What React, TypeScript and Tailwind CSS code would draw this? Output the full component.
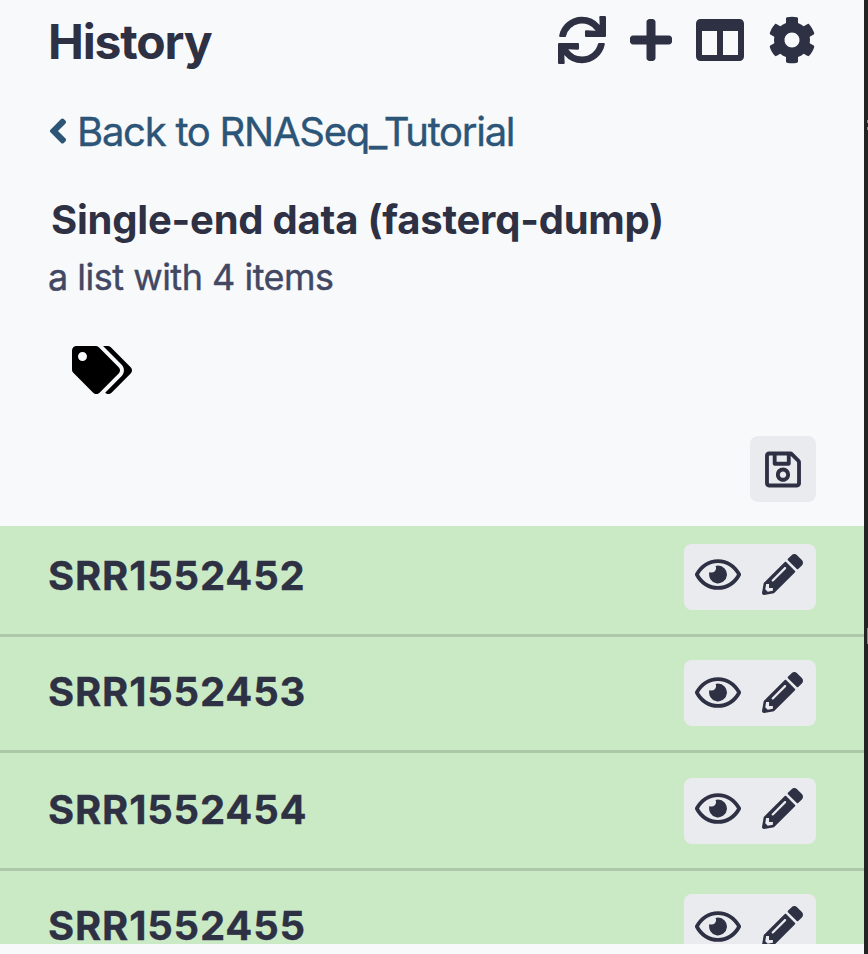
import { FaSync, FaPlus, FaColumns, FaCog, FaAngleLeft, FaTags, FaRegSave, FaRegEye, FaPencilAlt } from "react-icons/fa";

const items = [
  { name: "SRR1552452", row: "h-[111px] border-b-[3px] pt-[18px]", pad: "pb-[5px]" },
  { name: "SRR1552453", row: "h-[116px] border-b-[3px] pt-[23px]", pad: "pb-[2px]" },
  { name: "SRR1552454", row: "h-[118px] border-b-[3px] pt-[25px]", pad: "pb-[5px]" },
  { name: "SRR1552455", row: "h-[73px] pt-[23px]", pad: "pb-[1px]" },
];

export default function App() {
  return (
    <div className="flex h-[954px] w-[868px] overflow-hidden bg-[#232323] font-['Inter','Liberation_Sans',sans-serif] text-[#2e3044]">
      <main className="flex h-full w-[864px] flex-col bg-[#f8f9fb]">
        <header className="flex h-[80px] items-center justify-between pr-[48px] pl-[48px]">
          <h1 className="mt-[3px] text-[48px] leading-[56px] font-bold tracking-[-1.15px] whitespace-nowrap">History</h1>
          <div className="flex items-center gap-[24px]">
            <FaSync size={48} />
            <FaPlus className="h-[48px] w-[42px]" />
            <FaColumns size={48} />
            <FaCog size={48} />
          </div>
        </header>
        <a className="mt-[26px] ml-[48px] flex h-[52px] items-center text-[40px] leading-[52px] tracking-[-1.26px] whitespace-nowrap text-[#2c5577] [-webkit-text-stroke:0.4px]">
          <FaAngleLeft className="mr-[9px] mb-[2px] h-[40px] w-[20px]" />
          <span>Back to RNASeq_Tutorial</span>
        </a>
        <h2 className="mt-[36px] ml-[51px] h-[52px] text-[40px] leading-[52px] font-bold tracking-[-0.22px] whitespace-nowrap">
          <span>Single-end data (fasterq-dump)</span>
        </h2>
        <p className="mt-[7px] ml-[48px] h-[48px] text-[36px] leading-[48px] tracking-[-0.5px] whitespace-nowrap text-[#424763] [-webkit-text-stroke:0.4px]">
          <span>a list with 4 items</span>
        </p>
        <div className="mt-[45px] ml-[72px] h-[48px] text-black">
          <FaTags className="h-[48px] w-[60px]" />
        </div>
        <div className="mt-[42px] mr-[48px] flex h-[90px] justify-end">
          <button className="flex h-[66px] w-[66px] items-center justify-center rounded-[8px] bg-[#eaebef]">
            <FaRegSave className="h-[41px] w-[36px]" />
          </button>
        </div>
        <ul className="h-[418px] overflow-hidden bg-[#caeac5]">
          {items.map((item) => (
            <li key={item.name} className={`flex items-start justify-between overflow-hidden border-[#adc7a9] pr-[48px] pl-[48px] ${item.row}`}>
              <span className="text-[40px] leading-[64px] font-bold tracking-[0.8px] whitespace-nowrap [-webkit-text-stroke:0.3px]">{item.name}</span>
              <div className={`flex h-[66px] w-[132px] shrink-0 items-center rounded-[8px] bg-[#eaebef] pl-[11px] ${item.pad}`}>
                <FaRegEye className="h-[41px] w-[46px]" />
                <FaPencilAlt className="ml-[21px] h-[41px] w-[41px]" />
              </div>
            </li>
          ))}
        </ul>
      </main>
      <aside className="flex w-[4px] flex-col items-end">
        <span className="mt-[120px] h-[3px] w-px bg-[#8a8a8a]" />
        <span className="mt-[4px] h-[3px] w-px bg-[#8a8a8a]" />
        <span className="mt-[498px] h-[16px] w-px bg-[#8a8a8a]" />
      </aside>
    </div>
  );
}
